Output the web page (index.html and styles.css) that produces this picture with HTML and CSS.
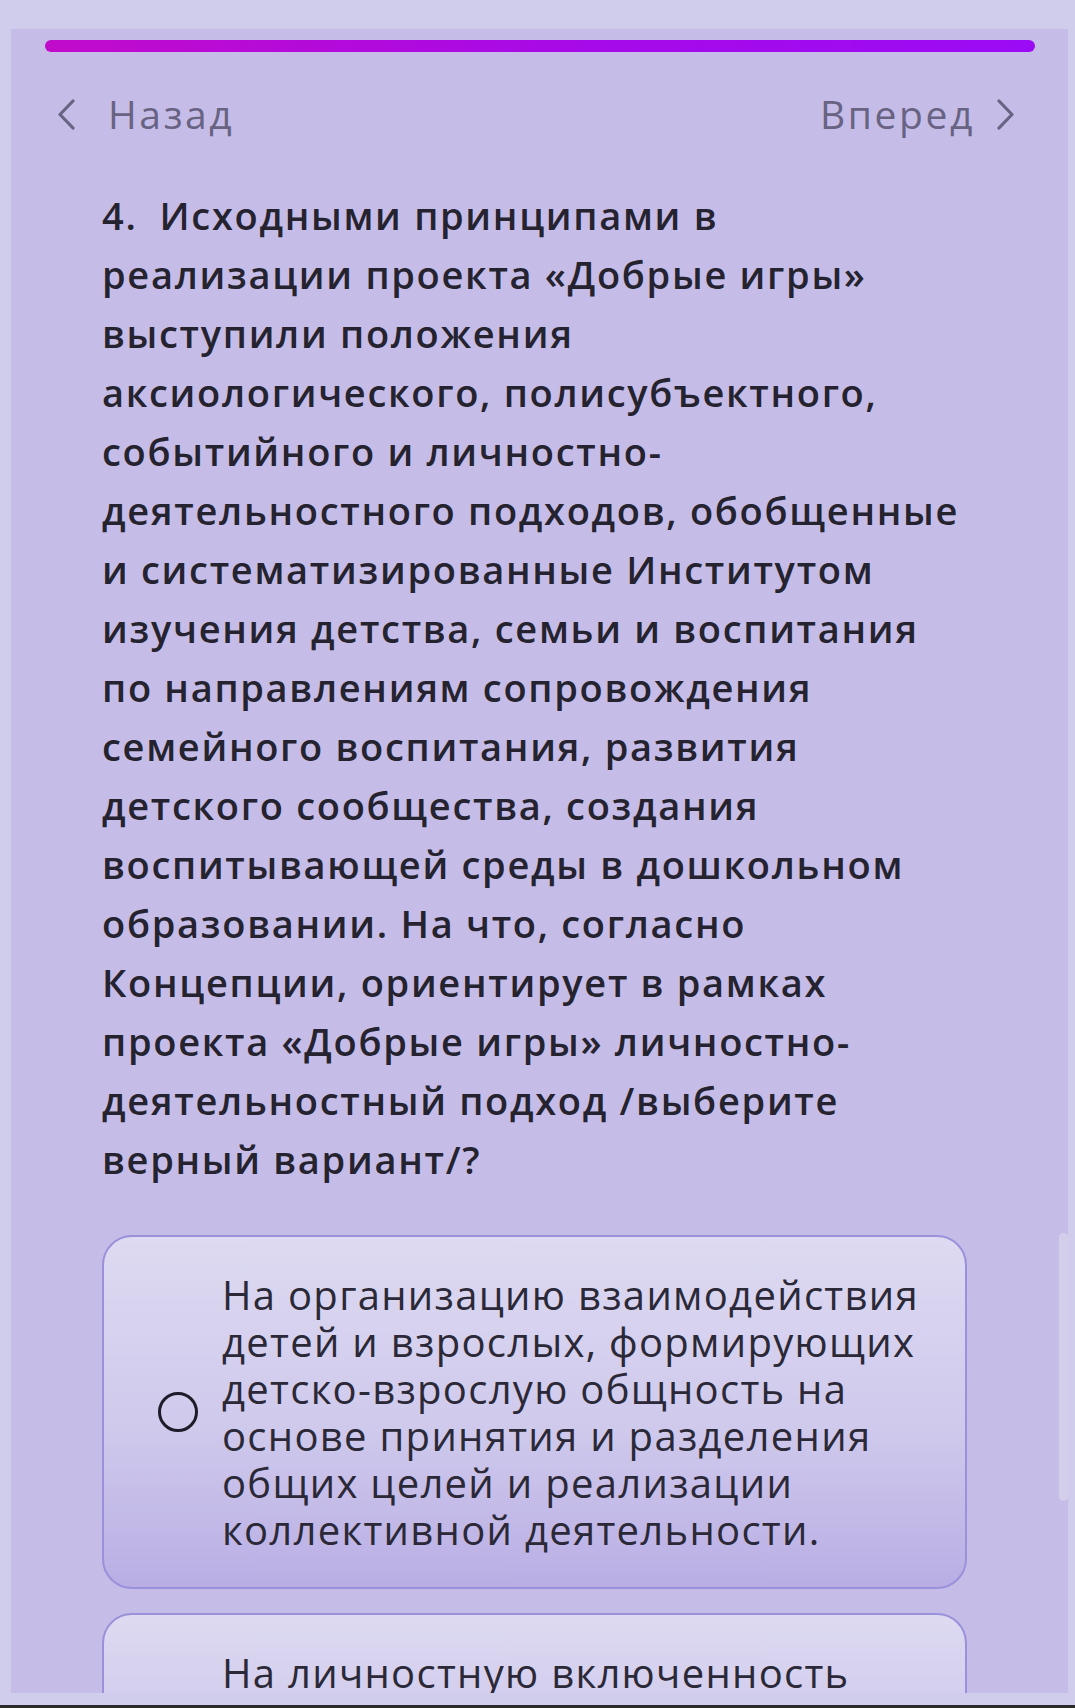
FILE: index.html
```html
<!DOCTYPE html>
<html lang="ru">
<head>
<meta charset="utf-8">
<title>Вопрос 4</title>
<link rel="stylesheet" href="styles.css">
</head>
<body>
<div class="panel">
  <div class="progress"></div>
  <div class="nav">
    <a class="nav-link">
      <svg class="chev" width="18" height="31" viewBox="0 0 18 31"><polyline points="16,2 3,15.5 16,29" fill="none" stroke="#686383" stroke-width="3.2" stroke-linecap="round" stroke-linejoin="round"/></svg>
      <span class="nav-text back">Назад</span>
    </a>
    <a class="nav-link">
      <span class="nav-text fwd">Вперед</span>
      <svg class="chev" width="18" height="31" viewBox="0 0 18 31"><polyline points="2,2 15,15.5 2,29" fill="none" stroke="#686383" stroke-width="3.2" stroke-linecap="round" stroke-linejoin="round"/></svg>
    </a>
  </div>
  <div class="question">
    <span class="line"><span class="num">4.</span>Исходными принципами в</span>
    <span class="line">реализации проекта «Добрые игры»</span>
    <span class="line">выступили положения</span>
    <span class="line">аксиологического, полисубъектного,</span>
    <span class="line">событийного и личностно-</span>
    <span class="line">деятельностного подходов, обобщенные</span>
    <span class="line">и систематизированные Институтом</span>
    <span class="line">изучения детства, семьи и воспитания</span>
    <span class="line">по направлениям сопровождения</span>
    <span class="line">семейного воспитания, развития</span>
    <span class="line">детского сообщества, создания</span>
    <span class="line">воспитывающей среды в дошкольном</span>
    <span class="line">образовании. На что, согласно</span>
    <span class="line">Концепции, ориентирует в рамках</span>
    <span class="line">проекта «Добрые игры» личностно-</span>
    <span class="line">деятельностный подход /выберите</span>
    <span class="line">верный вариант/?</span>
  </div>
  <div class="options">
    <div class="option">
      <span class="radio"></span>
      <div class="opt-text">
        <span class="line">На организацию взаимодействия</span>
        <span class="line">детей и взрослых, формирующих</span>
        <span class="line">детско-взрослую общность на</span>
        <span class="line">основе принятия и разделения</span>
        <span class="line">общих целей и реализации</span>
        <span class="line">коллективной деятельности.</span>
      </div>
    </div>
    <div class="option">
      <span class="radio"></span>
      <div class="opt-text">
        <span class="line">На личностную включенность</span>
        <span class="line">каждого ребенка в совместную</span>
        <span class="line">деятельность и общение.</span>
      </div>
    </div>
  </div>
  <div class="scrollbar"></div>
</div>
<div class="bottom-line"></div>
</body>
</html>
```
FILE: styles.css
```css
html, body {
  margin: 0;
  padding: 0;
}
body {
  background: #d0cdec;
  height: 1708px;
  overflow: hidden;
  font-family: "Open Sans", "Noto Sans", sans-serif;
}
.panel {
  position: relative;
  margin: 29px 7px 0 11px;
  height: 1664px;
  box-sizing: border-box;
  padding: 11px 33px 0 34px;
  background: #c5bde7;
  overflow: hidden;
}
.progress {
  height: 12px;
  border-radius: 6px;
  background: linear-gradient(90deg, #c10bcb 0%, #a60ae8 55%, #9b0bf5 100%);
}
.nav {
  display: flex;
  justify-content: space-between;
  align-items: center;
  height: 44px;
  margin-top: 40px;
  padding: 0 20px 0 12px;
}
.nav-link {
  display: flex;
  align-items: center;
  color: #686383;
}
.nav-text {
  font-size: 39px;
  font-weight: 400;
  letter-spacing: 2.6px;
  line-height: 44px;
}
.nav-text.back { margin-left: 33px; }
.nav-text.fwd { margin-right: 22px; }
.question {
  margin: 50px 0 0 57px;
  color: #25232f;
  font-size: 38px;
  font-weight: 600;
  line-height: 59px;
  letter-spacing: 1.7px;
}
.line {
  display: block;
  white-space: nowrap;
}
.num {
  margin-right: 22px;
}
.options {
  display: flex;
  flex-direction: column;
  gap: 24px;
  margin: 46px 0 0 57px;
  width: 865px;
}
.option {
  display: flex;
  align-items: center;
  box-sizing: border-box;
  padding: 34px 20px 34px 54px;
  border: 2px solid #9b90da;
  border-radius: 30px;
  background: linear-gradient(180deg, #dddaf1 0%, #cfc9ec 55%, #b9aee4 100%);
}
.radio {
  flex: none;
  width: 34px;
  height: 34px;
  border: 3px solid #1e1c28;
  border-radius: 50%;
  margin-right: 24px;
}
.opt-text {
  color: #2b2937;
  font-size: 40px;
  font-weight: 400;
  line-height: 47px;
  letter-spacing: 1.3px;
}
.scrollbar {
  position: absolute;
  left: 1048px;
  top: 1204px;
  width: 9px;
  height: 268px;
  border-radius: 5px;
  background: #d3cfeb;
}
.bottom-line {
  margin-top: 12px;
  height: 3px;
  background: #2a2a2a;
}
```
